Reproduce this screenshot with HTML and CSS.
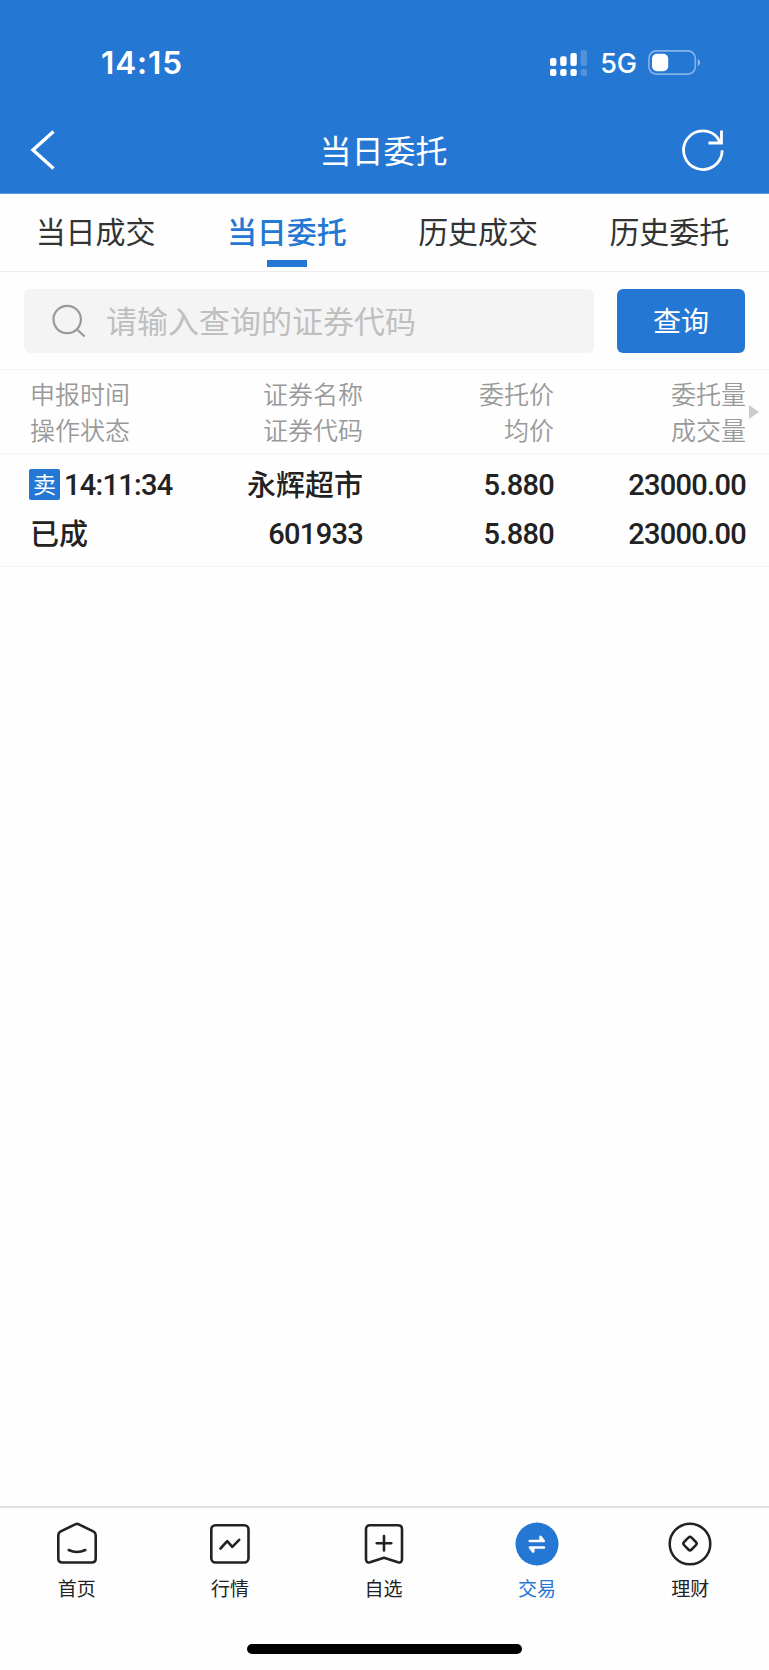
FILE: index.html
```html
<!DOCTYPE html>
<html lang="zh-CN">
<head>
    <meta charset="UTF-8">
    <meta name="viewport" content="width=device-width, initial-scale=1.0">
    <title>当日委托</title>
    <link rel="stylesheet" href="styles.css">
</head>
<body>
    <header class="top">
        <div class="status-bar">
            <span class="time">14:15</span>
            <div class="status-icons">
                <svg class="signal" width="38" height="28" viewBox="0 0 38 28" fill="#fff">
                    <rect x="0" y="9" width="6.4" height="8" rx="2"/>
                    <rect x="10.2" y="7.2" width="6.4" height="9.8" rx="2"/>
                    <rect x="20.4" y="4" width="6.4" height="13" rx="2"/>
                    <rect x="30.6" y="1" width="6.4" height="16" rx="2" opacity="0.2"/>
                    <rect x="0" y="20" width="6.4" height="7" rx="2"/>
                    <rect x="10.2" y="20" width="6.4" height="7" rx="2"/>
                    <rect x="20.4" y="20" width="6.4" height="7" rx="2"/>
                    <rect x="30.6" y="20" width="6.4" height="7" rx="2" opacity="0.2"/>
                </svg>
                <span class="network">5G</span>
                <svg class="battery" width="53" height="26" viewBox="0 0 53 26">
                    <rect x="0.9" y="0.9" width="46.4" height="23.2" rx="7.5" fill="none" stroke="#fff" stroke-width="1.6" opacity="0.45"/>
                    <rect x="4" y="3.7" width="16.2" height="17.6" rx="5" fill="#fff"/>
                    <path d="M49.8 9c3 1.200 3 6 0 7.200z" fill="#fff" opacity="0.5"/>
                </svg>
            </div>
        </div>
        <div class="nav">
            <svg class="back" width="26" height="42" viewBox="0 0 26 42" fill="none" stroke="#fff" stroke-width="3.4">
                <path d="M23.500 2.500L3 21l20.500 18.500"/>
            </svg>
            <h1>当日委托</h1>
            <svg class="refresh" width="42" height="42" viewBox="0 0 42 42" fill="none" stroke="#fff" stroke-width="2.800">
                <path d="M40.200 21.300A19.300 19.300 0 1 1 36.500 9.800"/>
                <path d="M39.500 1.500V14H26.500M38.500 13.500L35 8.500"/>
            </svg>
        </div>
    </header>

    <nav class="tabs">
        <a class="tab">当日成交</a>
        <a class="tab active">当日委托</a>
        <a class="tab">历史成交</a>
        <a class="tab">历史委托</a>
    </nav>

    <div class="search">
        <div class="search-box">
            <svg width="34" height="34" viewBox="0 0 34 34" fill="none" stroke="#999" stroke-width="2.200">
                <circle cx="15.200" cy="15.500" r="13.700"/>
                <path d="M25 25.500l7.500 7"/>
            </svg>
            <span>请输入查询的证券代码</span>
        </div>
        <button class="search-button">查询</button>
    </div>

    <div class="row head">
        <div class="cell"><span>申报时间</span><span>操作状态</span></div>
        <div class="cell"><span>证券名称</span><span>证券代码</span></div>
        <div class="cell"><span>委托价</span><span>均价</span></div>
        <div class="cell"><span>委托量</span><span>成交量</span></div>
        <i class="more"></i>
    </div>
    <div class="row order">
        <div class="cell">
            <span class="when"><b class="badge">卖</b><span class="num">14:11:34</span></span>
            <span>已成</span>
        </div>
        <div class="cell"><span>永辉超市</span><span class="num">601933</span></div>
        <div class="cell"><span class="num">5.880</span><span class="num">5.880</span></div>
        <div class="cell"><span class="num">23000.00</span><span class="num">23000.00</span></div>
    </div>

    <footer class="bottom">
        <div class="menu">
            <a class="item">
                <svg width="46" height="46" viewBox="0 0 46 46" fill="none" stroke="#222" stroke-width="2.600" stroke-linecap="round" stroke-linejoin="round">
                    <path d="M21.200 3.300Q23 2.400 24.800 3.300L39.700 10.700Q41.700 11.800 41.700 14.200V37.500Q41.700 41.500 37.700 41.500H8.300Q4.300 41.500 4.300 37.500V14.200Q4.300 11.800 6.300 10.700Z"/>
                    <path d="M14.700 29Q23 33 31.300 29"/>
                </svg>
                <span>首页</span>
            </a>
            <a class="item">
                <svg width="46" height="46" viewBox="0 0 46 46" fill="none" stroke="#222" stroke-width="2.600" stroke-linecap="round" stroke-linejoin="round">
                    <rect x="4.300" y="4.300" width="37.200" height="37.200" rx="4.200"/>
                    <path d="M13.500 27.500L20.200 20.200L25.300 25.800L32.200 18.800"/>
                </svg>
                <span>行情</span>
            </a>
            <a class="item">
                <svg width="46" height="46" viewBox="0 0 46 46" fill="none" stroke="#222" stroke-width="2.600" stroke-linecap="round" stroke-linejoin="round">
                    <path d="M9 4.300H37Q41 4.300 41 8.300V38Q41 42.300 37 41.200L23 36.800L9 41.200Q5 42.300 5 38V8.300Q5 4.300 9 4.300Z"/>
                    <path d="M23 15v14.500M15.700 22.200h14.600"/>
                </svg>
                <span>自选</span>
            </a>
            <a class="item active">
                <svg width="46" height="46" viewBox="0 0 46 46">
                    <circle cx="23" cy="23" r="21.500" fill="#2577d4"/>
                    <path d="M15.700 20H29.800L26.500 15.800V20M30 26.400H15.900L19.300 30.600V26.400" fill="#fff" stroke="#fff" stroke-width="2.500" stroke-linecap="round" stroke-linejoin="round"/>
                </svg>
                <span>交易</span>
            </a>
            <a class="item">
                <svg width="46" height="46" viewBox="0 0 46 46" fill="none" stroke="#222" stroke-width="2.500" stroke-linejoin="round">
                    <circle cx="23" cy="23" r="20.300"/>
                    <path d="M21.400 16.700Q23 15.100 24.600 16.700L28.900 21Q30.500 22.600 28.900 24.200L24.600 28.500Q23 30.100 21.400 28.500L17.100 24.200Q15.500 22.600 17.100 21Z"/>
                </svg>
                <span>理财</span>
            </a>
        </div>
        <div class="home-bar"></div>
    </footer>
</body>
</html>
```
FILE: styles.css
```css
* {
    margin: 0;
    padding: 0;
    box-sizing: border-box;
}

body {
    font-family: 'Noto Sans CJK SC', sans-serif;
    height: 1670px;
    display: flex;
    flex-direction: column;
    background: #fefefe;
    color: #222;
}

svg {
    display: block;
    flex: none;
}

/* Blue top area */
.top {
    height: 194px;
    background: #2577d4;
    color: #fff;
    border-bottom: 1px solid #5b9ae0;
}

.status-bar {
    display: flex;
    justify-content: space-between;
    align-items: center;
    height: 125px;
    padding: 0 68px 0 101px;
    font-family: Inter, sans-serif;
}

.time {
    font-size: 31.5px;
    font-weight: 600;
    letter-spacing: 0.9px;
}

.status-icons {
    display: flex;
    align-items: center;
}

.network {
    font-size: 27px;
    font-weight: 500;
    margin: 2px 11px 0 12px;
}

.nav {
    display: flex;
    justify-content: space-between;
    align-items: center;
    height: 50px;
    padding: 0 45px 0 30px;
}

.nav h1 {
    font-size: 32px;
    font-weight: 400;
    line-height: 46px;
    margin: 0 0 3px 29px;
}

/* Tabs */
.tabs {
    display: flex;
    height: 78px;
    padding-right: 4px;
    border-bottom: 1px solid #ececec;
}

.tab {
    flex: 1;
    display: flex;
    flex-direction: column;
    align-items: center;
    font-size: 30px;
    line-height: 44px;
    padding-top: 14px;
    color: #333;
}

.tab.active {
    color: #2577d4;
    font-weight: 500;
}

.tab.active::after {
    content: '';
    width: 40px;
    height: 7px;
    margin-top: 8px;
    background: #2577d4;
}

/* Search */
.search {
    display: flex;
    gap: 23px;
    height: 97px;
    padding: 17px 24px 16.5px;
}

.search-box {
    flex: 1;
    display: flex;
    align-items: center;
    gap: 20px;
    padding-left: 28px;
    border-radius: 6px;
    background: #f4f4f4;
    color: #bfbfbf;
    font-size: 31px;
}

.search-box span {
    padding-bottom: 2px;
}

.search-button {
    width: 128px;
    padding-bottom: 1px;
    border: none;
    border-radius: 6px;
    background: #2577d4;
    color: #fff;
    font-family: inherit;
    font-size: 28px;
}

/* Table */
.row {
    position: relative;
    display: grid;
    grid-template-columns: 200px 133px 191px 192px;
    padding-left: 30px;
    border-top: 1px solid #f4f4f4;
}

.cell {
    display: flex;
    flex-direction: column;
    align-items: flex-end;
    white-space: nowrap;
}

.cell:first-child {
    align-items: flex-start;
}

.head {
    height: 84px;
    padding-top: 5px;
    color: #999;
    font-size: 25px;
    font-weight: 350;
    line-height: 36px;
}

.more {
    position: absolute;
    right: 10px;
    top: 35px;
    border: solid transparent;
    border-width: 7px 0 7px 10px;
    border-left-color: #ccc;
}

.order {
    height: 114px;
    padding-top: 5px;
    border-bottom: 1px solid #f4f4f4;
    font-size: 29px;
    font-weight: 500;
    line-height: 49px;
}

.num {
    padding-top: 4px;
    font-family: Roboto, sans-serif;
    letter-spacing: -0.7px;
    line-height: 45px;
}

.when {
    display: flex;
    align-items: center;
}

.badge {
    width: 31px;
    height: 31px;
    margin: 2px 4px 0 -1px;
    border-radius: 2px;
    background: #2577d4;
    color: #fff;
    font-size: 23px;
    font-weight: 400;
    line-height: 29px;
    text-align: center;
}

/* Bottom menu */
.bottom {
    height: 164px;
    margin-top: auto;
    border-top: 2px solid #e0e0e0;
}

.menu {
    display: flex;
    height: 136px;
    padding: 13px 2px 0 0;
}

.item {
    flex: 1;
    display: flex;
    flex-direction: column;
    align-items: center;
    font-size: 19px;
    line-height: 28px;
}

.item span {
    margin-top: 7px;
}

.item.active {
    color: #2577d4;
}

.home-bar {
    width: 275px;
    height: 10px;
    margin: 0 auto;
    border-radius: 5px;
    background: #000;
}
```
